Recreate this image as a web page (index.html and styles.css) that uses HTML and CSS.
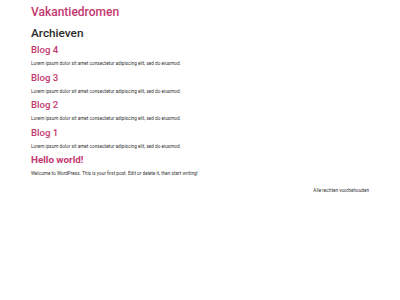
FILE: index.html
```html
<!DOCTYPE html>
<html lang="nl">
<head>
<meta charset="utf-8">
<title>Archieven - Vakantiedromen</title>
<link rel="stylesheet" href="styles.css">
</head>
<body>
<div class="page">
  <header class="site-header">
    <a class="site-title" href="#">Vakantiedromen</a>
  </header>
  <main class="content">
    <h1 class="archive-title">Archieven</h1>
    <article class="post">
      <h2 class="post-title"><a href="#">Blog 4</a></h2>
      <p class="post-excerpt">Lorem ipsum dolor sit amet consectetur adipiscing elit, sed do eiusmod.</p>
    </article>
    <article class="post">
      <h2 class="post-title"><a href="#">Blog 3</a></h2>
      <p class="post-excerpt">Lorem ipsum dolor sit amet consectetur adipiscing elit, sed do eiusmod.</p>
    </article>
    <article class="post">
      <h2 class="post-title"><a href="#">Blog 2</a></h2>
      <p class="post-excerpt">Lorem ipsum dolor sit amet consectetur adipiscing elit, sed do eiusmod.</p>
    </article>
    <article class="post">
      <h2 class="post-title"><a href="#">Blog 1</a></h2>
      <p class="post-excerpt">Lorem ipsum dolor sit amet consectetur adipiscing elit, sed do eiusmod.</p>
    </article>
    <article class="post">
      <h2 class="post-title post-title-bold"><a href="#">Hello world!</a></h2>
      <p class="post-excerpt">Welcome to WordPress. This is your first post. Edit or delete it, then start writing!</p>
    </article>
  </main>
  <footer class="site-footer">
    <p class="copyright">Alle rechten voorbehouden</p>
  </footer>
</div>
</body>
</html>
```

FILE: styles.css
```css
html, body {
  margin: 0;
  padding: 0;
  background: #ffffff;
}

body {
  font-family: Roboto, "Liberation Sans", Arial, sans-serif;
  color: #333333;
}

a {
  text-decoration: none;
  color: inherit;
}

.page {
  width: 338px;
  margin: 0 auto;
  display: flex;
  flex-direction: column;
}

.site-header {
  height: 24px;
  display: flex;
  align-items: center;
}

.site-title {
  font-size: 12px;
  font-weight: 500;
  line-height: 24px;
  color: #c2386f;
}

.content {
  display: flex;
  flex-direction: column;
}

.archive-title {
  margin: 0 0 1px;
  font-size: 11.8px;
  font-weight: 500;
  line-height: 18px;
  color: #2b2b2b;
}

.post {
  display: flex;
  flex-direction: column;
}

.post-title {
  margin: 0;
  font-size: 9.6px;
  font-weight: 500;
  line-height: 14px;
  color: #c2386f;
}

.post-title-bold {
  font-weight: 700;
  font-size: 9.8px;
}

.post-excerpt {
  margin: 0;
  font-size: 4.7px;
  line-height: 13.5px;
  color: #333333;
}

.site-footer {
  margin-top: 3px;
  display: flex;
  justify-content: flex-end;
}

.copyright {
  margin: 0;
  font-size: 4.7px;
  line-height: 14px;
  color: #333333;
}
```
